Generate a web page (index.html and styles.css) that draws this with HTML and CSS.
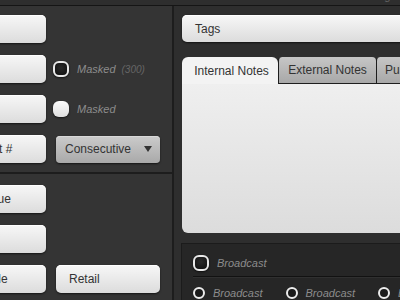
FILE: index.html
```html
<!DOCTYPE html>
<html>
<head>
<meta charset="utf-8">
<link rel="stylesheet" href="styles.css">
</head>
<body>
<div class="topbar"><span class="toptext">Account Settings</span></div>
<div class="main">
  <div class="left">
    <div class="section first">
      <div class="row"><div class="field"></div></div>
      <div class="row"><div class="field"></div><span class="check dark"></span><span class="label">Masked</span><span class="count">(300)</span></div>
      <div class="row"><div class="field"></div><span class="check light"></span><span class="label">Masked</span></div>
      <div class="row"><div class="field">Unit #</div><div class="select"><span>Consecutive</span><span class="arrow"></span></div></div>
    </div>
    <div class="section">
      <div class="row"><div class="field">Value</div></div>
      <div class="row"><div class="field"></div></div>
      <div class="row"><div class="field">Style</div><div class="button">Retail</div></div>
    </div>
  </div>
  <div class="right">
    <div class="tags">Tags</div>
    <div class="tabs">
      <div class="tab active">Internal Notes</div>
      <div class="tab ext">External Notes</div>
      <div class="tab pub">Public Notes</div>
    </div>
    <div class="panel"></div>
    <div class="bottom">
      <div class="brow"><span class="check dark"></span><span class="label">Broadcast</span></div>
      <div class="sep"></div>
      <div class="srow">
        <span class="radio"></span><span class="label">Broadcast</span>
        <span class="radio"></span><span class="label">Broadcast</span>
        <span class="radio"></span><span class="label">Broadcast</span>
      </div>
    </div>
  </div>
</div>
</body>
</html>
```

FILE: styles.css
```css
html, body {
  margin: 0;
  padding: 0;
}
body {
  width: 400px;
  height: 300px;
  overflow: hidden;
  background: #343434;
  font-family: "Liberation Sans", Arial, sans-serif;
  font-size: 12px;
  color: #333;
}
.topbar {
  height: 5px;
  background: #2e2e2e;
  border-bottom: 1px solid #151515;
  overflow: hidden;
  display: flex;
  justify-content: flex-end;
}
.toptext {
  font-size: 11px;
  color: #666;
  line-height: 11px;
  margin-top: -9px;
  padding-right: 4px;
}
.main {
  display: flex;
  height: 294px;
}
.left {
  width: 172px;
  flex: none;
  border-right: 2px solid #1d1d1d;
  background: #343434;
  overflow: hidden;
}
.section {
  display: flex;
  flex-direction: column;
  gap: 12px;
  padding: 11px 0 9px 0;
}
.section.first {
  padding-top: 9px;
  border-bottom: 2px solid #1d1d1d;
}
.row {
  display: flex;
  align-items: center;
  height: 28px;
}
.field {
  flex: none;
  box-sizing: border-box;
  width: 79px;
  height: 28px;
  margin-left: -33px;
  padding-left: 14px;
  border-radius: 5px;
  background: linear-gradient(#f7f7f7, #dcdcdc);
  box-shadow: 0 1px 2px rgba(0,0,0,0.6), inset 0 1px 0 #fff;
  display: flex;
  align-items: center;
  white-space: nowrap;
  overflow: hidden;
}
.check {
  flex: none;
  box-sizing: border-box;
  width: 16px;
  height: 16px;
  border-radius: 6px;
}
.check.dark {
  border: 2px solid #e8e8e8;
  background: radial-gradient(circle at 50% 40%, #2a2a2a, #0e0e0e);
  box-shadow: 0 1px 2px rgba(0,0,0,0.6);
}
.check.light {
  background: linear-gradient(#fbfbfb, #dedede);
  box-shadow: 0 1px 2px rgba(0,0,0,0.6);
}
.row .check {
  margin-left: 7px;
}
.label {
  font-style: italic;
  font-size: 11px;
  color: #8c8c8c;
  margin-left: 8px;
  white-space: nowrap;
}
.count {
  font-style: italic;
  font-size: 10px;
  color: #666;
  margin-left: 6px;
}
.select {
  flex: none;
  box-sizing: border-box;
  width: 104px;
  height: 27px;
  margin-left: 10px;
  padding: 0 8px 0 9px;
  border-radius: 4px;
  background: linear-gradient(#cbcbcb, #a9a9a9);
  box-shadow: 0 1px 2px rgba(0,0,0,0.6), inset 0 1px 0 #d8d8d8;
  display: flex;
  align-items: center;
  justify-content: space-between;
  color: #333;
}
.arrow {
  width: 0;
  height: 0;
  border-left: 4px solid transparent;
  border-right: 4px solid transparent;
  border-top: 6px solid #333;
}
.button {
  flex: none;
  box-sizing: border-box;
  width: 104px;
  height: 28px;
  margin-left: 10px;
  padding-left: 13px;
  border-radius: 5px;
  background: linear-gradient(#f7f7f7, #dcdcdc);
  box-shadow: 0 1px 2px rgba(0,0,0,0.6), inset 0 1px 0 #fff;
  display: flex;
  align-items: center;
}
.right {
  flex: 1;
  min-width: 0;
  background: #2e2e2e;
  padding: 9px 0 0 8px;
  overflow: hidden;
}
.tags {
  box-sizing: border-box;
  width: 240px;
  height: 27px;
  padding-left: 13px;
  border-radius: 5px 0 0 5px;
  background: linear-gradient(#f7f7f7, #dcdcdc);
  box-shadow: 0 1px 2px rgba(0,0,0,0.6), inset 0 1px 0 #fff;
  display: flex;
  align-items: center;
}
.tabs {
  display: flex;
  margin-top: 15px;
  height: 27px;
  white-space: nowrap;
}
.tab {
  flex: none;
  box-sizing: border-box;
  height: 27px;
  display: flex;
  align-items: center;
  justify-content: center;
}
.tab.active {
  width: 96px;
  padding-left: 3px;
  background: #f3f3f3;
  border-radius: 6px 6px 0 0;
}
.tab.ext, .tab.pub {
  border-left: 1px solid #1e1e1e;
  border-bottom: 1px solid #1e1e1e;
  background: linear-gradient(#c6c6c6, #a8a8a8);
  border-radius: 4px 4px 0 0;
}
.tab.ext {
  width: 98px;
}
.tab.pub {
  width: 90px;
  justify-content: flex-start;
  padding-left: 8px;
}
.panel {
  width: 240px;
  height: 149px;
  background: linear-gradient(#efefef, #dcdcdc);
  border-radius: 0 0 0 6px;
}
.bottom {
  box-sizing: border-box;
  width: 240px;
  height: 60px;
  margin-top: 10px;
  margin-left: -1px;
  background: #262626;
  border: 1px solid #1b1b1b;
  padding: 11px 0 0 11px;
}
.brow {
  display: flex;
  align-items: center;
  height: 16px;
}
.brow .label {
  margin-left: 8px;
}
.sep {
  height: 1px;
  background: #121212;
  border-bottom: 1px solid #303030;
  margin-top: 5px;
}
.srow {
  display: flex;
  align-items: center;
  height: 12px;
  margin-top: 9px;
}
.radio {
  flex: none;
  box-sizing: border-box;
  width: 12px;
  height: 12px;
  border-radius: 50%;
  border: 2px solid #ececec;
  background: #1a1a1a;
}
.srow .label {
  margin-left: 8px;
  margin-right: 23px;
}
```
